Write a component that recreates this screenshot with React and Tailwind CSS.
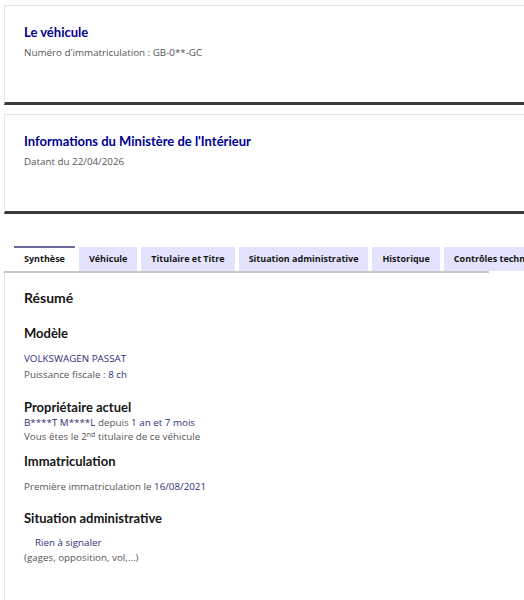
import { useState } from "react";

const tabs = [
  "Synthèse",
  "Véhicule",
  "Titulaire et Titre",
  "Situation administrative",
  "Historique",
  "Contrôles techniques",
];

function InfoCard({ title, subtitle, className = "" }) {
  return (
    <div
      className={
        "ml-1 border-l border-t border-[#e5e5e5] border-b-[3px] border-b-[#3a3a3a] bg-white pl-[19px] " +
        className
      }
    >
      <h2 className="font-['Lato',sans-serif] text-[13px] font-bold leading-none text-[#000091]">{title}</h2>
      <p className="mt-[9px] text-[9.8px] leading-none text-[#555]">{subtitle}</p>
    </div>
  );
}

export default function App() {
  const [active, setActive] = useState(0);

  return (
    <div className="h-[600px] w-[524px] overflow-hidden bg-white font-['Open_Sans',sans-serif]">
      <div className="pt-[5px]">
        <InfoCard
          title="Le véhicule"
          subtitle="Numéro d'immatriculation : GB-0**-GC"
          className="h-[100px] pt-[20px]"
        />
        <InfoCard
          title="Informations du Ministère de l'Intérieur"
          subtitle="Datant du 22/04/2026"
          className="mt-[9px] h-[100px] pt-[20px]"
        />
      </div>

      {/* onglets */}
      <div className="mt-[32px] ml-1 w-[485px] border-b-2 border-[#c8c8c8]">
        <div className="flex gap-[4px] pl-[10px] whitespace-nowrap">
          {tabs.map((t, i) => (
            <button
              key={t}
              onClick={() => setActive(i)}
              className={
                "h-[24px] shrink-0 px-[10px] text-[9px] font-bold text-[#161616] " +
                (i === active
                  ? "border-t-2 border-[#6a6a9c] bg-white"
                  : "mt-[1px] h-[23px] bg-[#e3e3fd]")
              }
            >
              {t}
            </button>
          ))}
        </div>
      </div>

      <div className="ml-1 border-l border-[#e5e5e5] pl-[19px] pb-10 text-[9.8px] leading-none text-[#555]">
        <h2 className="pt-[18px] font-['Lato',sans-serif] text-[14px] font-bold leading-none text-[#161616]">Résumé</h2>

        <h3 className="mt-[22px] font-['Lato',sans-serif] text-[13px] font-bold leading-none text-[#161616]">Modèle</h3>
        <p className="mt-[14px] text-[#2f2f7a]">VOLKSWAGEN PASSAT</p>
        <p className="mt-[6px]">
          Puissance fiscale : <span className="text-[#2f2f7a]">8 ch</span>
        </p>

        <h3 className="mt-[21px] font-['Lato',sans-serif] text-[13px] font-bold leading-none text-[#161616]">Propriétaire actuel</h3>
        <p className="mt-[4px] text-[#2f2f7a]">
          B****T M****L <span className="text-[#555]">depuis</span> 1 an et 7 mois
        </p>
        <p className="mt-[5px]">
          Vous êtes le 2<sup className="text-[7px]">nd</sup> titulaire de ce véhicule
        </p>

        <h3 className="mt-[13px] font-['Lato',sans-serif] text-[13px] font-bold leading-none text-[#161616]">Immatriculation</h3>
        <p className="mt-[14px]">
          Première immatriculation le <span className="text-[#2f2f7a]">16/08/2021</span>
        </p>

        <h3 className="mt-[20px] font-['Lato',sans-serif] text-[13px] font-bold leading-none text-[#161616]">Situation administrative</h3>
        <p className="mt-[13px] pl-[11px] text-[#2f2f7a]">Rien à signaler</p>
        <p className="mt-[5px]">(gages, opposition, vol,...)</p>
      </div>
    </div>
  );
}
